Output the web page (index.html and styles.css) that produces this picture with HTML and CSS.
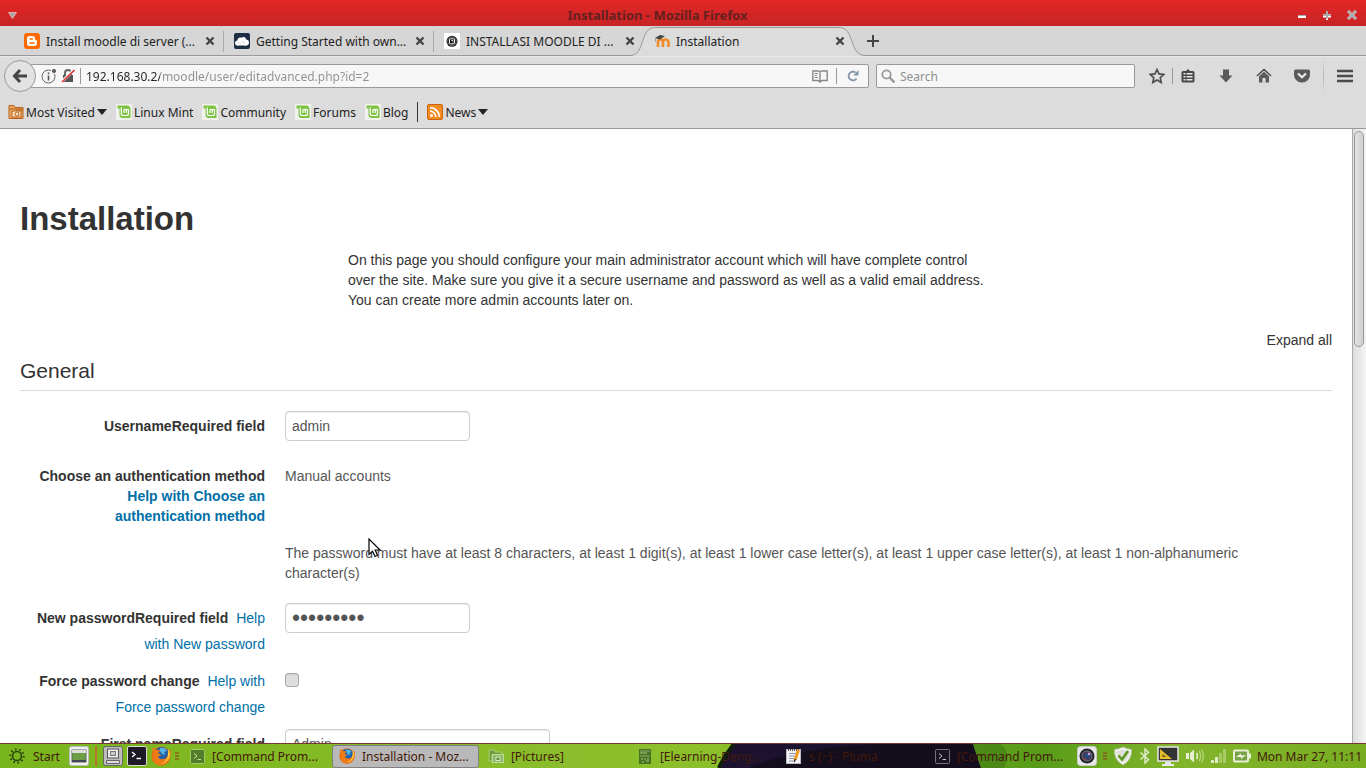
FILE: index.html
```
<!DOCTYPE html>
<html lang="en">
<head>
    <meta charset="UTF-8">
    <meta name="viewport" content="width=device-width, initial-scale=1.0">
    <title>Installation - Mozilla Firefox</title>
    <link rel="stylesheet" href="styles.css">
</head>
<body>
    <!-- shared symbols -->
    <svg class="symbols" aria-hidden="true">
        <symbol id="close" viewBox="0 0 10 10"><path d="M1.5 1.5l7 7M8.5 1.5l-7 7" stroke="currentColor" stroke-width="2.4"/></symbol>
        <symbol id="mint" viewBox="0 0 16 16">
            <rect width="16" height="16" fill="#f1f1ee"/>
            <path d="M1.5 1.5h9.500q3.500 0 3.500 3.500v9H6.500Q3.500 14 3.500 11V4.500h-2z" fill="#7ec343"/>
            <path d="M5.300 3.500v6q0 2 2 2h3.200q2 0 2-2V6.500q0-1.200-1-1.200t-1.200 1.200V9M10.300 6.500q0-1.200-1.200-1.200T7.900 6.500V9" fill="none" stroke="#fff" stroke-width="1.200"/>
        </symbol>
        <symbol id="terminal" viewBox="0 0 20 20">
            <rect x=".5" y=".5" width="19" height="19" rx="1.500" fill="#1d1a26" stroke="#d8d8d8"/>
            <path d="M5 6l3 2.500L5 11M9.500 12.500H14" fill="none" stroke="#fff" stroke-width="1.300"/>
        </symbol>
        <symbol id="firefox" viewBox="0 0 20 20">
            <circle cx="10" cy="10" r="9.600" fill="#e8670f"/>
            <circle cx="10.500" cy="8.500" r="7.500" fill="#2461a8"/>
            <path d="M9 2q5-1 7 3l-3 1 1 3-3-1-2-3z" fill="#58b5e3"/>
            <path d="M1 5l1-4 3 3q3-1 4 1L7 7l3 2q-1 2-3 1 1 4 5 3 4 0 5-5l2-5q2 6-1 11-3 5-8 5-6 0-8-6-1-4 1-8z" fill="#ef7b14"/>
            <path d="M17 3q4 6 0 11-3 4-7 4 6-3 7-8z" fill="#fbc43b"/>
        </symbol>
        <symbol id="arrow" viewBox="0 0 10 6"><path d="M0 0h10L5 6z" fill="#222"/></symbol>
        <symbol id="grip" viewBox="0 0 4 8"><path d="M0 1h4M0 4h4M0 7h4" stroke="#8a3c12"/></symbol>
    </svg>

    <header class="title-bar">
        <button class="window-menu" aria-label="Window menu"><svg width="9" height="7" viewBox="0 0 9 7"><path d="M.5 .5h8L4.500 6.500z" fill="#a5a5a5" stroke="#eaa"/></svg></button>
        <h1>Installation - Mozilla Firefox</h1>
        <div class="window-buttons">
            <button aria-label="Minimize"><svg width="10" height="10" viewBox="0 0 10 10"><path d="M1 5.500h8" stroke="#aaa"/><path d="M1 7h8" stroke="#fff" stroke-width="2"/></svg></button>
            <button aria-label="Maximize"><svg width="10" height="10" viewBox="0 0 10 10"><path d="M1 6.500h8M5 7v3" stroke="#fff" stroke-width="2"/><path d="M1 5h8M5 1v7.500" stroke="#aaa" stroke-width="2"/></svg></button>
            <button aria-label="Close"><svg width="10" height="10" viewBox="0 0 10 10"><path d="M1 1l8 8M9 1L1 9" stroke="#f0caca" stroke-width="3"/><path d="M1 1l8 8M9 1L1 9" stroke="#a8a8a8" stroke-width="2"/></svg></button>
        </div>
    </header>

    <nav class="tabs">
        <div class="tab">
            <svg width="16" height="16" viewBox="0 0 16 16"><rect width="16" height="16" rx="3" fill="#ff6a00"/><path d="M5.800 3h2.700q2.500 0 2.500 2.500v.8q0 .7 1 .7.900 0 .9 1v2.200q0 2.800-2.800 2.800H5.800Q3 13 3 10.200V5.800Q3 3 5.800 3z" fill="#fff"/><path d="M6 6h2.500M6 10h4" stroke="#ff6a00" stroke-width="1.400" stroke-linecap="round"/></svg>
            <button class="tab-title">Install moodle di server (...</button>
            <button class="tab-close" aria-label="Close tab"><svg width="10" height="10"><use href="#close"/></svg></button>
        </div>
        <div class="tab">
            <svg width="16" height="16" viewBox="0 0 16 16"><rect width="16" height="16" rx="2" fill="#1d2d44"/><circle cx="3.500" cy="10" r="2.500" fill="#fff"/><circle cx="6.500" cy="7.500" r="3" fill="#fff"/><circle cx="9.500" cy="6.500" r="2.500" fill="#fff"/><circle cx="12" cy="9.500" r="3" fill="#fff"/><path d="M3 9h10v3.500H3z" fill="#fff"/><path d="M4 9.500l3 1M8 8l3 2" stroke="#bcc5d0" stroke-width=".7"/></svg>
            <button class="tab-title">Getting Started with own...</button>
            <button class="tab-close" aria-label="Close tab"><svg width="10" height="10"><use href="#close"/></svg></button>
        </div>
        <div class="tab">
            <svg width="16" height="16" viewBox="0 0 16 16"><rect width="16" height="16" fill="#fff"/><circle cx="8" cy="8.300" r="5.500" fill="#111"/><circle cx="8" cy="8.300" r="4.300" fill="none" stroke="#aaa" stroke-width=".6"/><rect x="5.500" y="5.800" width="5" height="5" rx="1" fill="none" stroke="#fff"/><path d="M7 7.500h2v2" stroke="#fff" fill="none" stroke-width=".7"/></svg>
            <button class="tab-title">INSTALLASI MOODLE DI ...</button>
            <button class="tab-close" aria-label="Close tab"><svg width="10" height="10"><use href="#close"/></svg></button>
        </div>
        <div class="tab active">
            <svg class="tab-shape" width="240" height="30" viewBox="0 0 240 30"><path d="M0 29.500C16 29.500 9 1.500 25 1.500H209C225 1.500 219 29.500 235 29.500V30H0z" fill="#dcdcdc"/><path d="M0 29.500C16 29.500 9 1.500 25 1.500H209C225 1.500 219 29.500 235 29.500" fill="none" stroke="#999"/></svg>
            <svg width="16" height="16" viewBox="0 0 16 16"><path d="M4 14V9q0-2.500 2.500-2.500T9 9v5M9 9q0-2.500 2.500-2.500T14.500 9v5" fill="none" stroke="#f28a2a" stroke-width="2.600"/><path d="M1 5l5-3 5 1-5 3.500z" fill="#444"/><path d="M1.500 5v4" stroke="#888" stroke-width=".7"/></svg>
            <button class="tab-title">Installation</button>
            <button class="tab-close" aria-label="Close tab"><svg width="10" height="10"><use href="#close"/></svg></button>
        </div>
        <button class="new-tab" aria-label="New tab"><svg width="12" height="12" viewBox="0 0 12 12"><path d="M0 6h12M6 0v12" stroke="#444" stroke-width="2"/></svg></button>
    </nav>

    <div class="nav-bar">
        <button class="back" aria-label="Back"><svg width="16" height="16" viewBox="0 0 16 16"><path d="M8 2L2.500 8 8 14M3 8h12" fill="none" stroke="#444" stroke-width="3"/></svg></button>
        <div class="url-box">
            <svg width="16" height="16" viewBox="0 0 16 16"><circle cx="7.500" cy="8.500" r="6.500" fill="none" stroke="#666"/><path d="M7.500 7.500v5M7.500 4.500v1.800" stroke="#555" stroke-width="1.600"/><circle cx="13" cy="3" r="3" fill="#f7f7f7"/><circle cx="13" cy="3" r="2" fill="#555"/></svg>
            <svg width="14" height="14" viewBox="0 0 14 14"><path d="M4 6.500V4q0-3 3-3t3 3v2.500" fill="none" stroke="#666" stroke-width="2"/><rect x="2" y="6" width="10" height="7" fill="#555"/><path d="M1 12.500L13 1" stroke="#fff" stroke-width="3"/><path d="M1 13L13.500 1" stroke="#d83434" stroke-width="1.600"/></svg>
            <i class="divider"></i>
            <input class="url" type="text" aria-label="Address" value="192.168.30.2/moodle/user/editadvanced.php?id=2">
            <svg width="16" height="13" viewBox="0 0 16 13"><path d="M.8 1h5.700L8 2l1.500-1h5.700v9.500H10L8 12l-2-1.500H.8zM8 2v9" fill="none" stroke="#888" stroke-width="1.400"/><path d="M2.500 3.500H6M2.500 5.500H5M2.500 7.500H6" stroke="#888"/></svg>
            <i class="divider wide"></i>
            <button class="reload" aria-label="Reload"><svg width="12" height="12" viewBox="0 0 12 12"><path d="M9.500 8.500A4.300 4.300 0 1 1 8.500 2.500" fill="none" stroke="#8798a8" stroke-width="2"/><path d="M11.500 0v5.500H6z" fill="#8798a8"/></svg></button>
        </div>
        <div class="search-box">
            <svg width="14" height="14" viewBox="0 0 14 14"><circle cx="5.500" cy="5.500" r="4.200" fill="none" stroke="#999" stroke-width="1.800"/><path d="M8.500 8.500l5 5" stroke="#999" stroke-width="2.400"/></svg>
            <input type="search" placeholder="Search" aria-label="Search">
        </div>
        <div class="tools">
            <button aria-label="Bookmark this page"><svg width="16" height="16" viewBox="0 0 16 16"><path d="M8 1.500l2 4.400 4.800.5-3.600 3.300 1 4.800L8 12l-4.200 2.500 1-4.800L1.200 6.400 6 5.900z" fill="none" stroke="#4a4a4a" stroke-width="1.600"/></svg></button>
            <i class="divider"></i>
            <button aria-label="Bookmarks"><svg width="16" height="16" viewBox="0 0 16 16"><path d="M3 3h3l2-2 2 2h3q1.500 0 1.500 1.500V13q0 1.500-1.500 1.500H3Q1.500 14.500 1.500 13V4.500Q1.500 3 3 3z" fill="#4a4a4a"/><path d="M3.500 5.800h2M3.500 8.800h2M3.500 11.800h2M6.500 5.800h6M6.500 8.800h6M6.500 11.800h6" stroke="#e6e6e6" stroke-width="1.400"/></svg></button>
            <button aria-label="Downloads"><svg width="16" height="16" viewBox="0 0 16 16"><path d="M5 1.500h6v6h3.500L8 14.500 1.500 7.500H5z" fill="#5a5a5a"/></svg></button>
            <button aria-label="Home"><svg width="16" height="16" viewBox="0 0 16 16"><path d="M1 8l7-6.500L15 8" fill="none" stroke="#4a4a4a" stroke-width="1.600"/><path d="M3 8.500l5-4.700 5 4.700v6H9.500V10h-3v4.500H3z" fill="#5a5a5a"/></svg></button>
            <button aria-label="Pocket"><svg width="16" height="16" viewBox="0 0 16 16"><path d="M1.500 1.500h13q1.500 0 1.500 1.500v4q0 3-2.300 5.200T8 14.500t-5.700-2.300T0 7V3q0-1.500 1.500-1.500z" fill="#5a5a5a"/><path d="M4 5.500l4 3.800 4-3.800" fill="none" stroke="#eee" stroke-width="2"/></svg></button>
            <i class="divider soft"></i>
            <button aria-label="Menu"><svg width="16" height="16" viewBox="0 0 16 16"><path d="M0 3h16M0 8h16M0 13h16" stroke="#4a4a4a" stroke-width="2.600"/></svg></button>
        </div>
    </div>

    <div class="bookmarks">
        <a href="#"><svg width="16" height="16" viewBox="0 0 16 16"><path d="M1 14.500v-13h5l1 2h8v11z" fill="#eba45e" stroke="#b8641c"/><path d="M1 5h14M8 6h7" stroke="#b8641c"/><rect x="4" y="7" width="9" height="6" fill="#fbe3c4" stroke="#b8641c"/><circle cx="9" cy="10" r="2" fill="none" stroke="#b8641c"/></svg>Most Visited<svg width="10" height="6"><use href="#arrow"/></svg></a>
        <a href="#"><svg width="16" height="16"><use href="#mint"/></svg>Linux Mint</a>
        <a href="#"><svg width="16" height="16"><use href="#mint"/></svg>Community</a>
        <a href="#"><svg width="16" height="16"><use href="#mint"/></svg>Forums</a>
        <a href="#"><svg width="16" height="16"><use href="#mint"/></svg>Blog</a>
        <i class="divider"></i>
        <a href="#"><svg width="16" height="16" viewBox="0 0 16 16"><rect x=".5" y=".5" width="15" height="15" rx="1.500" fill="#f18b22" stroke="#c9650d"/><circle cx="4.500" cy="11.500" r="1.500" fill="#fff"/><path d="M3 7.200a5.800 5.800 0 0 1 5.800 5.800M3 3.700a9.300 9.300 0 0 1 9.300 9.300" fill="none" stroke="#fff" stroke-width="1.700"/></svg>News<svg width="10" height="6"><use href="#arrow"/></svg></a>
    </div>

    <div class="viewport">
        <main class="page">
            <h2>Installation</h2>
            <p class="intro">On this page you should configure your main administrator account which will have complete control over the site. Make sure you give it a secure username and password as well as a valid email address. You can create more admin accounts later on.</p>
            <a class="expand" href="#">Expand all</a>
            <form>
                <h3>General</h3>
                <div class="row">
                    <div class="label"><label for="username">UsernameRequired field</label></div>
                    <div class="control"><input type="text" id="username" value="admin"></div>
                </div>
                <div class="row static">
                    <div class="label"><b>Choose an authentication method <a href="#">Help with Choose an authentication method</a></b></div>
                    <div class="control">Manual accounts</div>
                </div>
                <div class="row">
                    <div class="label"></div>
                    <div class="control">The password must have at least 8 characters, at least 1 digit(s), at least 1 lower case letter(s), at least 1 upper case letter(s), at least 1 non-alphanumeric character(s)</div>
                </div>
                <div class="row tight">
                    <div class="label"><label for="password">New passwordRequired field</label> <a class="help" href="#">Help with New password</a></div>
                    <div class="control"><input type="password" id="password" value="Admin-123"></div>
                </div>
                <div class="row tight">
                    <div class="label"><label for="force">Force password change</label> <a class="help" href="#">Help with Force password change</a></div>
                    <div class="control"><input type="checkbox" id="force"></div>
                </div>
                <div class="row">
                    <div class="label"><label for="firstname">First nameRequired field</label></div>
                    <div class="control"><input class="wide" type="text" id="firstname" value="Admin"></div>
                </div>
            </form>
        </main>
        <div class="scrollbar"><div class="thumb"></div></div>
        <svg class="pointer" width="14" height="20" viewBox="0 0 14 20"><path d="M1 1v15.500l3.500-3.200L7 18.500l2.500-1.200L7.200 12H12z" fill="#fff" stroke="#000" stroke-width="1.200"/></svg>
    </div>

    <footer class="taskbar">
        <svg class="wallpaper" viewBox="0 0 1366 24" preserveAspectRatio="none">
            <path d="M719 24L734 0H973L981 24z" fill="#130d1c"/>
            <path d="M750 24Q790 4 880 0H735L720 24z" fill="#1c1230"/>
            <path d="M719 24Q724 12 734 0" fill="none" stroke="#10200a" stroke-width="4"/>
            <path d="M973 0L981 24H1004Q1012 8 1000 0z" fill="#3f7a14" opacity=".6"/>
        </svg>
        <button class="start"><svg width="16" height="16" viewBox="0 0 16 16"><circle cx="8" cy="8" r="4.500" fill="none" stroke="#2c4410" stroke-width="1.600"/><circle cx="8" cy="8" r="6.700" fill="none" stroke="#2c4410" stroke-width="2" stroke-dasharray="1.500 2.700"/></svg>Start</button>
        <div class="launchers">
            <button aria-label="Show desktop"><svg width="20" height="20" viewBox="0 0 20 20"><rect x=".5" y=".5" width="19" height="19" rx="2" fill="#f1f1ef" stroke="#bbb"/><rect x="3" y="4" width="14" height="12" fill="#6f9f45" stroke="#565"/><path d="M3 5.500h14" stroke="#dedede" stroke-width="3"/><path d="M3 15h14" stroke="#445" stroke-width="2"/></svg></button>
            <i class="bar"></i>
            <button aria-label="Files"><svg width="20" height="20" viewBox="0 0 20 20"><rect x=".5" y=".5" width="19" height="19" rx="2" fill="#bdbdbd" stroke="#666"/><rect x="4.500" y="3" width="11" height="9" fill="#eee" stroke="#555"/><rect x="7.500" y="5.500" width="5" height="4" fill="#ccc" stroke="#777"/><path d="M3.500 14.500h13v3h-13z" fill="#ddd" stroke="#666"/></svg></button>
            <button aria-label="Terminal"><svg width="20" height="20"><use href="#terminal"/></svg></button>
            <button aria-label="Firefox"><svg width="20" height="20"><use href="#firefox"/></svg></button>
            <svg width="4" height="8"><use href="#grip"/></svg>
        </div>
        <div class="tasks">
            <button><svg width="15" height="15" viewBox="0 0 15 15"><rect x=".5" y=".5" width="14" height="14" rx="1" fill="#527d2b" stroke="#a2cb65"/><path d="M4 4.500l3 2.500-3 2.500M7.500 10.500H11" fill="none" stroke="#cbe5a0"/></svg>[Command Prom...</button>
            <button class="current"><svg width="16" height="16"><use href="#firefox"/></svg>Installation - Moz...</button>
            <button><svg width="16" height="16" viewBox="0 0 16 16"><path d="M1 13V2h5l1 2h7v3H4v6z" fill="#6d9e3b" stroke="#a8cf76"/><rect x="4.500" y="6.500" width="11" height="8" fill="#8fb869" stroke="#c0dc9a"/><rect x="8" y="9" width="4" height="3.500" fill="#638e3f" stroke="#d5e8ba"/></svg>[Pictures]</button>
            <button><svg width="16" height="15" viewBox="0 0 16 15"><rect x="2" width="12" height="15" fill="#45731e"/><path d="M3 2h10M3 7h10" stroke="#91ad6c"/><path d="M3 4h7M4 10h2M7 10h2M10 10h2M5 13h2M9 12h3" stroke="#aac88a"/></svg>[Elearning-Deng...</button>
            <button><svg width="16" height="16" viewBox="0 0 16 16"><rect x=".5" y="1.500" width="14" height="14" fill="#f4f4f4" stroke="#bbb"/><path d="M2 2h12" stroke="#555" stroke-width="2" stroke-dasharray="1 1"/><path d="M3 5.500h8M3 8h7M3 10.500h6M3 13h4" stroke="#8993b5"/><path d="M12.500 2L9 12" stroke="#f39a21" stroke-width="3"/><path d="M9.500 11L8 14" stroke="#333" stroke-width="1.500"/></svg>s (~) - Pluma</button>
            <button><svg width="15" height="15" viewBox="0 0 15 15"><rect x=".5" y=".5" width="14" height="14" rx="1" fill="#191421" stroke="#777080"/><path d="M4 4.500l3 2.500-3 2.500M7.500 10.500H11" fill="none" stroke="#c8c4cc"/></svg>[Command Prom...</button>
        </div>
        <div class="tray">
            <svg width="20" height="20" viewBox="0 0 20 20"><rect x=".5" y=".5" width="19" height="19" rx="3" fill="#e8e8e8" stroke="#ccc"/><circle cx="10" cy="10" r="7.500" fill="#24242c"/><circle cx="10" cy="10" r="5" fill="#433657" stroke="#778"/><circle cx="10" cy="10" r="2.600" fill="#224b83"/><circle cx="12" cy="8" r="1.300" fill="#d0a4d4"/><path d="M6.500 12q1 2 3 2" stroke="#b64532" fill="none"/></svg>
            <svg width="4" height="8"><use href="#grip"/></svg>
            <svg width="20" height="20" viewBox="0 0 20 20"><path d="M10 1Q14 3 18.500 3.500 19 14 10 19 1 14 1.500 3.500 6 3 10 1z" fill="#f4f4f0" stroke="#b9c4a4"/><path d="M10 3.500q3 1.500 6.500 2Q16.500 12.500 10 16.500 3.500 12.500 3.500 5.500 7 5 10 3.500z" fill="#dedfd8"/><path d="M5.500 9.500l3.500 4L15 5" fill="none" stroke="#5b961e" stroke-width="2.600"/></svg>
            <svg width="12" height="16" viewBox="0 0 12 16"><path d="M1.500 4.500l8 7L6 15V1l3.500 3.500-8 7" fill="none" stroke="#e2eccb" stroke-width="1.500"/></svg>
            <svg width="22" height="20" viewBox="0 0 22 20"><rect x="1" y="1" width="20" height="14" fill="#333" stroke="#e8e8e8" stroke-width="1.500"/><path d="M3 13V3l12 10z" fill="#e8bd2c"/><path d="M5.500 11V8l4 3z" fill="#765e17"/><path d="M8 16h6v2h3v2H5v-2h3z" fill="#e8e8e8"/></svg>
            <svg width="20" height="16" viewBox="0 0 20 16"><path d="M1 5h3v6H1zM5 5l4-3.500v13L5 11z" fill="#e8efd5"/><path d="M11.500 5q2 3 0 6" fill="none" stroke="#e8efd5" stroke-width="1.500"/><path d="M14 3q3.500 5 0 10M16.500 1.500q4 6.500 0 13" fill="none" stroke="#b5d477" stroke-width="1.400"/></svg>
            <svg width="16" height="14" viewBox="0 0 16 14"><path d="M0 11h3v3H0zM4 8h3v6H4z" fill="#e2ebc9"/><path d="M8 4h3v10H8zM12 0h3v14h-3z" fill="#aac967"/></svg>
            <svg width="18" height="14" viewBox="0 0 18 14"><rect x="1" y="1.500" width="14" height="11" rx="1" fill="#79a443" stroke="#e8efd8" stroke-width="2"/><path d="M16 4.500h2v5h-2z" fill="#e8efd8"/><path d="M3 8l5-3.500v2l5-.5-5 4v-2z" fill="#f1f5e8"/></svg>
            <time>Mon Mar 27, 11:11</time>
        </div>
    </footer>
</body>
</html>
```
FILE: styles.css
```
* {
    margin: 0;
    padding: 0;
    box-sizing: border-box;
}

body {
    font-family: 'Noto Sans', sans-serif;
    font-size: 12px;
    color: #222;
    background: #dcdcdc;
    height: 100vh;
    display: flex;
    flex-direction: column;
    overflow: hidden;
}

button {
    background: none;
    border: none;
    font: inherit;
    color: inherit;
    display: flex;
    align-items: center;
    justify-content: center;
}

svg {
    flex-shrink: 0;
}

a {
    color: #0070a8;
    text-decoration: none;
}

.symbols {
    position: absolute;
    width: 0;
    height: 0;
}

.divider {
    width: 1px;
    height: 16px;
    background: #999;
}

.divider.soft {
    height: 34px;
    background: linear-gradient(#dcdcdc, #b5b5b5, #dcdcdc);
}

/* Title bar */
.title-bar {
    height: 26px;
    flex-shrink: 0;
    display: flex;
    align-items: center;
    justify-content: space-between;
    padding: 4px 9px 0 8px;
    background: linear-gradient(#e32626, #c72424);
}

.title-bar h1 {
    font-size: 13px;
    line-height: 18px;
    font-weight: 700;
    color: #66201f;
}

.window-menu {
    width: 60px;
    justify-content: flex-start;
}

.window-buttons {
    width: 110px;
    display: flex;
    justify-content: flex-end;
    gap: 15px;
}

/* Tabs */
.tabs {
    height: 30px;
    flex-shrink: 0;
    display: flex;
    padding-left: 14px;
    background: #d6d6d6;
    border-bottom: 1px solid #999;
}

.tab {
    position: relative;
    width: 210px;
    height: 30px;
    padding: 0 9px 0 10px;
    display: flex;
    align-items: center;
    gap: 6px;
}

.tab:nth-child(-n+2) {
    background: linear-gradient(#aaa, #aaa) right 5px / 1px 21px no-repeat;
}

.tab > * {
    position: relative;
}

.tab > .tab-shape {
    position: absolute;
    left: -14px;
    top: 0;
}

.tab-title {
    flex: 1;
    justify-content: flex-start;
    white-space: nowrap;
}

.tab-close {
    color: #444;
}

.new-tab {
    padding: 0 13px;
}

/* Navigation toolbar */
.nav-bar {
    height: 40px;
    flex-shrink: 0;
    display: flex;
    align-items: center;
    padding: 0 8px 0 4px;
    box-shadow: inset 0 1px #e8e8e8;
}

.back {
    position: relative;
    width: 32px;
    height: 32px;
    flex-shrink: 0;
    border: 1px solid #999;
    border-radius: 50%;
    background: #e2e2e2;
}

.url-box,
.search-box {
    height: 24px;
    display: flex;
    align-items: center;
    background: #f7f7f7;
    border: 1px solid #999;
    border-radius: 2px;
}

.url-box {
    flex: 1;
    gap: 4px;
    margin-left: -6px;
    padding: 0 9px 0 10px;
}

.url-box .divider {
    margin: 0 1px;
}

.url-box .wide {
    margin: 0 6px 0 4px;
}

.url-box input,
.search-box input {
    flex: 1;
    min-width: 0;
    border: none;
    outline: none;
    background: none;
    font: inherit;
}

/* host dark, path grey */
.url-box .url {
    color: transparent;
    background: linear-gradient(to right, #222 74px, #8f8f8f 74px);
    -webkit-background-clip: text;
    background-clip: text;
}

.search-box {
    width: 259px;
    margin-left: 7px;
    padding: 0 4px;
    gap: 5px;
}

.search-box input::placeholder {
    color: #8f8f8f;
}

.tools {
    display: flex;
    align-items: center;
    gap: 22px;
    margin-left: 14px;
    padding-right: 5px;
}

.tools .divider {
    margin: 0 -15px;
}

.tools .soft {
    margin: 0 -9px;
}

/* Bookmarks toolbar */
.bookmarks {
    height: 33px;
    flex-shrink: 0;
    display: flex;
    align-items: center;
    gap: 9px;
    padding: 0 8px;
    border-bottom: 1px solid #999;
}

.bookmarks a {
    display: flex;
    align-items: center;
    gap: 2px;
    color: #222;
}

.bookmarks .divider {
    height: 20px;
    background: #333;
}

/* Page */
.viewport {
    position: relative;
    flex: 1;
    min-height: 0;
    display: flex;
    overflow: hidden;
    background: #fff;
}

.page {
    flex: 1;
    padding: 70px 20px 0;
    font-family: 'Liberation Sans', sans-serif;
    font-size: 14px;
    line-height: 20px;
    color: #333;
}

.page h2 {
    font-size: 33px;
    line-height: 40px;
    margin-bottom: 11px;
}

.intro {
    width: 50%;
    margin: 0 auto 20px;
    padding-right: 14px;
}

.expand {
    display: block;
    text-align: right;
    color: #333;
}

.page h3 {
    padding-top: 2px;
    font-size: 21px;
    line-height: 38px;
    font-weight: 400;
    border-bottom: 1px solid #ddd;
    margin-bottom: 20px;
}

.row {
    display: flex;
    gap: 20px;
    margin-bottom: 20px;
}

.row.static {
    margin-bottom: 17px;
}

.row.tight {
    margin-bottom: 9px;
}

.label {
    width: 245px;
    flex-shrink: 0;
    padding: 2px 0 0 12px;
    text-align: right;
    line-height: 26px;
}

.label label {
    font-weight: 700;
}

.label .help {
    margin-left: 4px;
}

.static .label {
    padding-top: 0;
    line-height: 20px;
}

.control {
    flex: 1;
    padding-right: 20px;
    color: #555;
}

.control input {
    display: block;
    width: 185px;
    height: 30px;
    margin-bottom: 5px;
    padding: 4px 6px;
    border: 1px solid #ccc;
    border-radius: 4px;
    box-shadow: inset 0 1px 1px rgba(0, 0, 0, 0.075);
    background: #fff;
    color: #555;
    font: inherit;
}

.control .wide {
    width: 265px;
}

.control input[type="password"] {
    font-size: 23px;
}

.control input[type="checkbox"] {
    appearance: none;
    width: 14px;
    height: 14px;
    margin-top: 7px;
    padding: 0;
    border-color: #aaa;
    border-radius: 3px;
    background: #dedede;
}

.scrollbar {
    width: 14px;
    flex-shrink: 0;
    padding: 2px 1px;
    border-left: 1px solid #aaa;
    background: linear-gradient(to right, #ddd, #f3f3f3);
}

.thumb {
    width: 10px;
    height: 216px;
    border: 1px solid #999;
    border-radius: 5px;
    background: linear-gradient(to right, #e2e2e2, #d0d0d0);
}

.pointer {
    position: absolute;
    left: 368px;
    top: 409px;
}

/* Taskbar */
.taskbar {
    position: relative;
    height: 25px;
    flex-shrink: 0;
    display: flex;
    align-items: center;
    border-top: 1px solid #7a352c;
    background: linear-gradient(to right, #79b51c, #8abd2b 40%, #8cc02b 52%, #579b18 76%, #82b52b 86%, #78ad22);
    color: #43190b;
}

.taskbar > * {
    position: relative;
}

.taskbar > .wallpaper {
    position: absolute;
    left: 0;
    top: 0;
    width: 100%;
    height: 100%;
}

.start {
    gap: 8px;
    padding: 0 9px;
}

.launchers,
.tray {
    display: flex;
    align-items: center;
    gap: 4px;
}

.launchers .bar {
    width: 2px;
    height: 20px;
    margin: 0 2px;
    background: #b8742c;
}

.tasks {
    flex: 1;
    display: grid;
    grid-template-columns: repeat(6, 1fr);
    margin-left: 4px;
}

.tasks button {
    height: 23px;
    gap: 7px;
    margin-right: 2px;
    padding: 0 6px;
    border: 1px solid transparent;
    border-radius: 3px;
    justify-content: flex-start;
    white-space: nowrap;
}

.tasks .current {
    background: #b9b9b9;
    border-color: #808080;
}

.tray {
    gap: 6px;
    padding-right: 4px;
}
```
